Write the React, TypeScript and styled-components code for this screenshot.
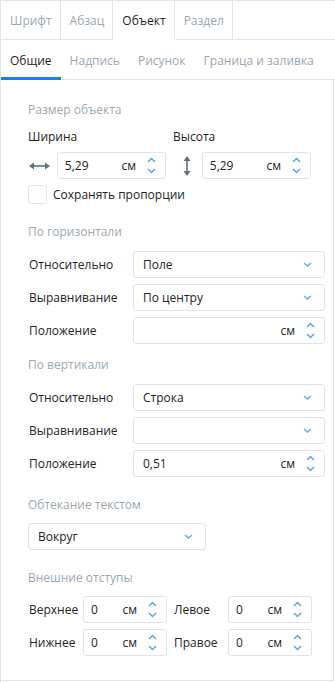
import * as React from "react";
import styled, { createGlobalStyle } from "styled-components";

const GlobalStyle = createGlobalStyle`
  html, body { margin: 0; padding: 0; background: #fff; }
  body {
    font-family: "Open Sans", "Noto Sans", sans-serif;
    font-size: 12px;
    color: #232323;
  }
`;

const Root = styled.div`
  width: 335px;
  height: 682px;
  display: flex;
  flex-direction: column;
  box-sizing: border-box;
  border-left: 1px solid #e1e5ea;
  white-space: nowrap;
`;

const TabBar = styled.div`
  display: flex;
  height: 40px;
  box-sizing: border-box;
  border-top: 1px solid #e1e5ea;
`;

const Tab = styled.div<{ $active?: boolean }>`
  display: flex;
  align-items: center;
  padding: 0 8px 0 9px;
  border-right: 1px solid #e1e5ea;
  border-bottom: 1px solid ${(p) => (p.$active ? "#fff" : "#e1e5ea")};
  color: ${(p) => (p.$active ? "#1f1f1f" : "#9ba6b1")};
`;

const TabFiller = styled.div`
  flex: 1;
  border-bottom: 1px solid #e1e5ea;
`;

const SubTabBar = styled.div`
  display: flex;
  height: 40px;
  box-sizing: border-box;
  border-bottom: 1px solid #e1e5ea;
`;

const SubTab = styled.div<{ $active?: boolean }>`
  display: flex;
  align-items: center;
  padding: 3px 9px 0;
  margin-bottom: -1px;
  box-sizing: border-box;
  border-bottom: 3px solid ${(p) => (p.$active ? "#1a80e2" : "transparent")};
  color: ${(p) => (p.$active ? "#1f1f1f" : "#9ba6b1")};
`;

const Panel = styled.div`
  flex: 1;
  margin: 0 1px 1px 0;
  padding: 21px 0 0 27px;
  border-right: 1px solid #e1e5ea;
  border-bottom: 1px solid #e1e5ea;
  display: flex;
  flex-direction: column;
`;

const SectionTitle = styled.div<{ $top: number; $bottom: number }>`
  color: #9ca7b1;
  line-height: 18px;
  margin: ${(p) => p.$top}px 0 ${(p) => p.$bottom}px;
`;

const SizeGrid = styled.div`
  display: grid;
  grid-template-columns: 138px 138px;
  column-gap: 7px;
`;

const SizeLabel = styled.div`
  line-height: 18px;
  margin: 9px 0 6px;
`;

const SizeRow = styled.div`
  display: flex;
  align-items: center;
`;

const IconCell = styled.div<{ $align: string }>`
  width: 29px;
  height: 27px;
  display: flex;
  align-items: center;
  justify-content: ${(p) => p.$align};
  padding-left: ${(p) => (p.$align === "center" ? "0" : "1px")};
  box-sizing: border-box;
`;

const Box = styled.div<{ $w: number }>`
  width: ${(p) => p.$w}px;
  height: 27px;
  box-sizing: border-box;
  border: 1px solid #dfe4ea;
  border-radius: 3px;
  display: flex;
  align-items: center;
  background: #fff;
`;

const Value = styled.span<{ $pad: number }>`
  flex: 1;
  padding-left: ${(p) => p.$pad}px;
`;

const Unit = styled.span`
  margin-right: 11px;
`;

const Spinner = styled.div`
  display: flex;
  flex-direction: column;
  gap: 5px;
  margin-right: 9px;
`;

const Caret = styled.div`
  margin-right: 12px;
  display: flex;
`;

const CheckRow = styled.label`
  display: flex;
  align-items: center;
  gap: 6px;
  margin-top: 6px;
  line-height: 19px;
`;

const CheckBox = styled.span`
  width: 19px;
  height: 19px;
  box-sizing: border-box;
  border: 1px solid #dfe4ea;
  border-radius: 3px;
`;

const Rows = styled.div`
  display: flex;
  flex-direction: column;
  gap: 6px;
`;

const FieldRow = styled.div`
  display: flex;
  align-items: center;
`;

const RowLabel = styled.div<{ $w: number }>`
  width: ${(p) => p.$w}px;
  flex-shrink: 0;
  padding-left: 1px;
  box-sizing: border-box;
`;

const MarginGrid = styled.div`
  display: grid;
  grid-template-columns: 139px 139px;
  column-gap: 6px;
  row-gap: 6px;
`;

const Up = () => (
  <svg width="9" height="6" viewBox="0 0 9 6">
    <path d="M1 5 L4.5 1.5 L8 5" fill="none" stroke="#5fa4e6" strokeWidth="1.5" />
  </svg>
);

const Down = () => (
  <svg width="9" height="6" viewBox="0 0 9 6">
    <path d="M1 1 L4.5 4.5 L8 1" fill="none" stroke="#5fa4e6" strokeWidth="1.5" />
  </svg>
);

const SmallDown = () => (
  <svg width="9" height="5" viewBox="0 0 9 5">
    <path d="M1 1 L4.5 4 L8 1" fill="none" stroke="#6aaee9" strokeWidth="1.6" />
  </svg>
);

const HArrow = () => (
  <svg width="21" height="8" viewBox="0 0 21 8">
    <line x1="4" y1="4" x2="17" y2="4" stroke="#5b7180" strokeWidth="1.6" />
    <path d="M0 4 L5 0.5 L5 7.5 Z" fill="#5b7180" />
    <path d="M21 4 L16 0.5 L16 7.5 Z" fill="#5b7180" />
  </svg>
);

const VArrow = () => (
  <svg width="8" height="20" viewBox="0 0 8 20">
    <line x1="4" y1="4" x2="4" y2="16" stroke="#5b7180" strokeWidth="1.6" />
    <path d="M4 0 L0.5 5 L7.5 5 Z" fill="#5b7180" />
    <path d="M4 20 L0.5 15 L7.5 15 Z" fill="#5b7180" />
  </svg>
);

const NumberField = ({ w, value, pad = 7 }: { w: number; value: string; pad?: number }) => (
  <Box $w={w}>
    <Value $pad={pad}>{value}</Value>
    <Unit>см</Unit>
    <Spinner>
      <Up />
      <Down />
    </Spinner>
  </Box>
);

const SelectField = ({ w, value }: { w: number; value: string }) => (
  <Box $w={w}>
    <Value $pad={9}>{value}</Value>
    <Caret>
      <SmallDown />
    </Caret>
  </Box>
);

const App = () => {
  const tabs = ["Шрифт", "Абзац", "Объект", "Раздел"];
  const subTabs = ["Общие", "Надпись", "Рисунок", "Граница и заливка"];

  return (
    <Root>
      <GlobalStyle />
      <TabBar>
        {tabs.map((t) => (
          <Tab key={t} $active={t === "Объект"}>
            {t}
          </Tab>
        ))}
        <TabFiller />
      </TabBar>
      <SubTabBar>
        {subTabs.map((t) => (
          <SubTab key={t} $active={t === "Общие"}>
            {t}
          </SubTab>
        ))}
      </SubTabBar>
      <Panel>
        <SectionTitle $top={0} $bottom={0}>Размер объекта</SectionTitle>
        <SizeGrid>
          <div>
            <SizeLabel>Ширина</SizeLabel>
            <SizeRow>
              <IconCell $align="flex-start">
                <HArrow />
              </IconCell>
              <NumberField w={110} value="5,29" />
            </SizeRow>
          </div>
          <div>
            <SizeLabel>Высота</SizeLabel>
            <SizeRow>
              <IconCell $align="center">
                <VArrow />
              </IconCell>
              <NumberField w={110} value="5,29" />
            </SizeRow>
          </div>
        </SizeGrid>
        <CheckRow>
          <CheckBox />
          Сохранять пропорции
        </CheckRow>

        <SectionTitle $top={19} $bottom={10}>По горизонтали</SectionTitle>
        <Rows>
          <FieldRow>
            <RowLabel $w={105}>Относительно</RowLabel>
            <SelectField w={192} value="Поле" />
          </FieldRow>
          <FieldRow>
            <RowLabel $w={105}>Выравнивание</RowLabel>
            <SelectField w={192} value="По центру" />
          </FieldRow>
          <FieldRow>
            <RowLabel $w={105}>Положение</RowLabel>
            <NumberField w={192} value="" pad={9} />
          </FieldRow>
        </Rows>

        <SectionTitle $top={12} $bottom={10}>По вертикали</SectionTitle>
        <Rows>
          <FieldRow>
            <RowLabel $w={105}>Относительно</RowLabel>
            <SelectField w={192} value="Строка" />
          </FieldRow>
          <FieldRow>
            <RowLabel $w={105}>Выравнивание</RowLabel>
            <SelectField w={192} value="" />
          </FieldRow>
          <FieldRow>
            <RowLabel $w={105}>Положение</RowLabel>
            <NumberField w={192} value="0,51" pad={9} />
          </FieldRow>
        </Rows>

        <SectionTitle $top={19} $bottom={9}>Обтекание текстом</SectionTitle>
        <SelectField w={178} value="Вокруг" />

        <SectionTitle $top={19} $bottom={9}>Внешние отступы</SectionTitle>
        <MarginGrid>
          <FieldRow>
            <RowLabel $w={55}>Верхнее</RowLabel>
            <NumberField w={85} value="0" />
          </FieldRow>
          <FieldRow>
            <RowLabel $w={55}>Левое</RowLabel>
            <NumberField w={85} value="0" />
          </FieldRow>
          <FieldRow>
            <RowLabel $w={55}>Нижнее</RowLabel>
            <NumberField w={85} value="0" />
          </FieldRow>
          <FieldRow>
            <RowLabel $w={55}>Правое</RowLabel>
            <NumberField w={85} value="0" />
          </FieldRow>
        </MarginGrid>
      </Panel>
    </Root>
  );
};

export default App;
